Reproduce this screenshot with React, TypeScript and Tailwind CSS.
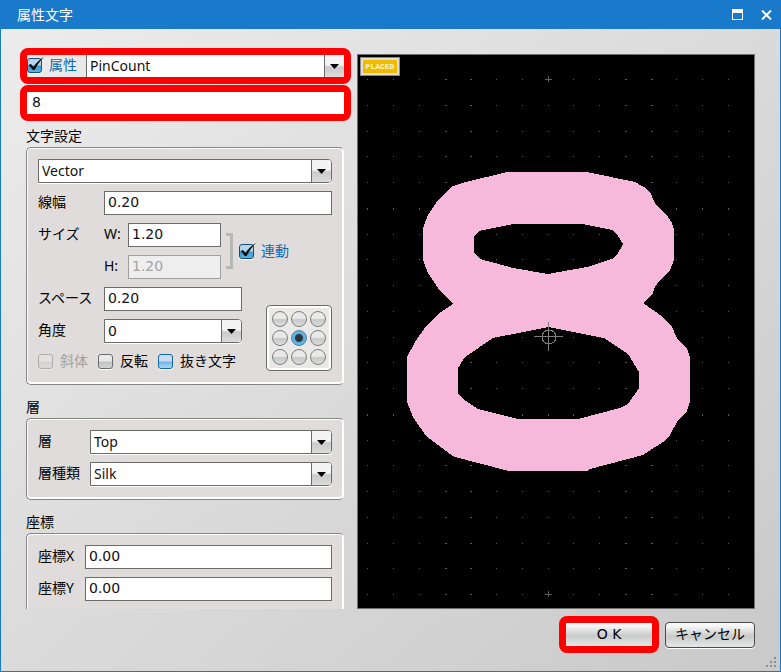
import { useState, type ReactNode } from "react";

const OUTER =
  "M507 172H587L635 182L644 187L650 192L655 203L668 217L672 223L674 229V260L670 270L660 280L655 287L652 295L643 303L663 317L672 327L677 338L687 349L690 357V402L687 411L677 422L670 435L666 440L643 455L590 469L587 471H509L455 457L450 454L426 436L413 417L407 402V357L415 342L426 326L438 314L453 304L440 291L428 273L423 260V228L428 215L438 200L451 187L462 183Z";
const UPPER_HOLE =
  "M513 224H583L612 230L618 236L623 244L617 255L612 259L587 267L548 274L513 268L480 259L474 253V237L479 231Z";
const LOWER_HOLE =
  "M548 327L604 338L628 354L639 372V388L628 404L620 408L578 419H518L478 409L463 399L458 393V368L465 357L493 338Z";

const GRID_STEP = 25.75;

type SelectBoxProps = {
  id: string;
  label?: string;
  options: string[];
  framed?: boolean;
  className?: string;
};

function SelectBox({ id, label, options, framed = true, className = "" }: SelectBoxProps) {
  return (
    <div
      className={`relative flex min-w-0 overflow-hidden bg-white ${
        framed
          ? "h-6 rounded-r border border-[#6b6b6b] shadow-[0_1px_0_#fff]"
          : "h-full border-l border-[#6b6b6b]"
      } ${className}`}
    >
      <select
        id={id}
        aria-label={label}
        className="w-full appearance-none bg-white pl-[3px] text-sm leading-[22px] text-[#111] outline-none"
      >
        {options.map((option) => (
          <option key={option}>{option}</option>
        ))}
      </select>
      <span className="pointer-events-none absolute inset-y-0 right-0 flex w-5 items-center justify-center border-l border-[#6b6b6b] bg-linear-to-b from-[#f4f4f4] from-45% via-[#c9cacb] via-55% to-[#dcdddd]">
        <svg width="9" height="5" viewBox="0 0 9 5">
          <path d="M0 0H9L4.500 5Z" fill="#000" />
        </svg>
      </span>
    </div>
  );
}

type TextBoxProps = {
  id: string;
  value: string;
  disabled?: boolean;
  className?: string;
};

function TextBox({ id, value, disabled = false, className = "" }: TextBoxProps) {
  const [text, setText] = useState(value);
  return (
    <input
      id={id}
      type="text"
      value={text}
      disabled={disabled}
      onChange={(e) => setText(e.target.value)}
      className={`h-6 min-w-0 border border-[#6b6b6b] bg-white pb-0.5 pl-[3px] font-['DejaVu_Sans',sans-serif] text-sm text-[#111] outline-none disabled:border-[#a0a0a0] disabled:bg-[#eeeeee] disabled:text-[#a3a3a3] ${className}`}
    />
  );
}

type CheckProps = {
  label: string;
  checked?: boolean;
  disabled?: boolean;
  tone?: "gray" | "blue";
  textClass?: string;
};

function Check({ label, checked = false, disabled = false, tone = "gray", textClass = "text-black" }: CheckProps) {
  const [on, setOn] = useState(checked);
  const box =
    tone === "blue"
      ? "border-[#10649f] bg-linear-to-b from-[#c5def3] from-45% via-[#79b4e3] via-55% to-[#a9d8f7]"
      : "border-[#6b6b6b] bg-linear-to-b from-[#e9e9e9] from-45% via-[#c3c4c4] via-55% to-[#d3d3d3]";
  const ticked = "checked:border-[#124f7c] checked:from-[#b5d5ec] checked:via-[#3d9bd3] checked:to-[#58b3e3]";
  return (
    <label className={`flex items-center gap-[7px] text-sm leading-5 ${textClass}`}>
      <span className="relative flex size-[15px]">
        <input
          type="checkbox"
          checked={on}
          disabled={disabled}
          onChange={() => setOn(!on)}
          className={`size-[15px] appearance-none rounded-[3px] border shadow-[0_1px_0_#fff] disabled:opacity-40 ${box} ${ticked}`}
        />
        {on && (
          <svg className="pointer-events-none absolute -top-px left-0" width="18" height="16" viewBox="0 0 18 16">
            <path d="M1.500 8L4 7L6.500 10C9 6 12.500 2.500 17 0C13 4 10 8.500 7.500 13H5.800C4.500 11 3 9.500 1.500 8Z" fill="#080c10" />
          </svg>
        )}
      </span>
      <span>{label}</span>
    </label>
  );
}

function Group({ title, children }: { title: string; children: ReactNode }) {
  return (
    <section className="mr-[7px] ml-1.5 shrink-0">
      <h2 className="pb-px text-sm leading-5 text-black">{title}</h2>
      <div className="flex flex-col gap-2 rounded-[5px] border border-[#858585] border-r-white bg-[#e0dcdb] p-[11px] pb-[13px] shadow-[inset_0_0_0_1px_#fff,inset_0_-1px_0_1px_#fff]">
        {children}
      </div>
    </section>
  );
}

type RowProps = {
  id: string;
  label: string;
  labelClass: string;
  children: ReactNode;
};

function Row({ id, label, labelClass, children }: RowProps) {
  return (
    <div className="flex">
      <label htmlFor={id} className={`shrink-0 text-sm leading-[22px] text-black ${labelClass}`}>
        {label}
      </label>
      {children}
    </div>
  );
}

function AnchorPicker() {
  const [anchor, setAnchor] = useState(4);
  return (
    <fieldset className="grid grid-cols-3 gap-[3px] rounded border border-[#6b6b6b] bg-[#ebe9e8] p-[5px] shadow-[inset_0_0_0_2px_#fff]">
      {Array.from({ length: 9 }, (_, i) => (
        <input
          key={i}
          type="radio"
          name="anchor"
          aria-label={`anchor ${i + 1}`}
          checked={anchor === i}
          onChange={() => setAnchor(i)}
          className="size-4 appearance-none rounded-full border border-[#7d7d7d] bg-linear-to-b from-[#e9e9e9] from-45% via-[#c6c8c9] via-55% to-[#dcdddd] checked:border-[#4e7fa5] checked:bg-radial checked:from-[#30353a] checked:from-35% checked:via-[#55aee0] checked:via-45% checked:to-[#86c1e8]"
        />
      ))}
    </fieldset>
  );
}

function Preview() {
  const dots = [];
  for (let row = -10; row <= 10; row++) {
    for (let col = -7; col <= 7; col++) {
      const wide = Math.abs(col) === 3 || Math.abs(col) === 4;
      const tall = row === -5 || row === 3;
      dots.push(
        <rect
          key={`${row}:${col}`}
          x={Math.floor(548 + col * GRID_STEP)}
          y={Math.round(336.5 + row * GRID_STEP)}
          width={wide ? 2 : 1}
          height={tall ? 2 : 1}
        />
      );
    }
  }

  return (
    <div className="relative mt-1.5 min-w-0 flex-1 border border-[#6f6f6f] bg-black">
      <svg
        className="absolute inset-0 size-full"
        viewBox="358 55 396 553"
        preserveAspectRatio="xMidYMid slice"
        shapeRendering="crispEdges"
      >
        <g fill="#585858">{dots}</g>
        <path d="M545 79.500H552M548.500 76V82M545 594.500H552M548.500 591V597" stroke="#5f5f5f" />
        <path d={OUTER + UPPER_HOLE + LOWER_HOLE} fill="#f6b8db" fillRule="evenodd" />
        <g stroke="#7d7d7d" fill="none">
          <path d="M534 336.500H563M548.500 322V351" />
          <circle cx="549" cy="337" r="7" />
        </g>
      </svg>
      <span className="absolute top-0.5 left-0.5 flex h-[19px] w-10 items-center justify-center border border-[#8a8a8a] bg-[#efbb00] font-['Liberation_Mono',monospace] text-[8px] leading-none font-bold text-[#fff6c4] shadow-[inset_0_0_0_2px_#e2ddd0]">
        PLACED
      </span>
    </div>
  );
}

const buttonClass =
  "h-[26px] bg-linear-to-b from-[#f8f8f8] from-10% via-[#c9cbcb] via-55% to-[#e6e7e7] pb-0.5 text-sm leading-5 text-black";

function App() {
  return (
    <div className="flex h-screen flex-col border border-t-0 border-[#1979ca] bg-linear-to-br from-[#ededed] to-[#c9c9c9] font-['Noto_Sans','Noto_Sans_CJK_JP',sans-serif]">
      <header className="flex h-[29px] shrink-0 items-center bg-[#1979ca] pr-2 pl-4 text-white">
        <h1 className="flex-1 text-sm leading-5">属性文字</h1>
        <button type="button" aria-label="最大化" className="mr-[18px]">
          <svg width="11" height="11" viewBox="0 0 11 11" shapeRendering="crispEdges">
            <path d="M0 0H11V11H0ZM1 4V10H10V4Z" fill="#fff" fillRule="evenodd" />
          </svg>
        </button>
        <button type="button" aria-label="閉じる">
          <svg width="11" height="10" viewBox="0 0 11 10">
            <path d="M1 0.500L10 9.500M10 0.500L1 9.500" stroke="#fff" strokeWidth="2" />
          </svg>
        </button>
      </header>

      <main className="flex min-h-0 flex-1 gap-1.5 pt-[19px] pr-[25px] pl-[19px]">
        <div className="flex w-[331px] shrink-0 flex-col overflow-hidden">
          <div className="flex h-9 shrink-0 overflow-hidden rounded-lg border-[7px] border-[#ff0000]">
            <div className="w-[59px]">
              <Check label="属性" checked tone="blue" textClass="text-[#0f6ab4]" />
            </div>
            <SelectBox id="attribute" label="属性" options={["PinCount"]} framed={false} className="flex-1" />
          </div>
          <div className="mt-px mb-[5px] flex h-9 shrink-0 overflow-hidden rounded-lg border-[7px] border-[#ff0000]">
            <input
              type="text"
              aria-label="値"
              defaultValue="8"
              className="w-full bg-white pb-0.5 pl-[5px] font-['DejaVu_Sans',sans-serif] text-sm text-[#111] outline-none"
            />
          </div>

          <div className="flex min-h-0 flex-col gap-3 overflow-hidden">
            <Group title="文字設定">
              <SelectBox id="font" label="フォント" options={["Vector", "TrueType"]} />
              <Row id="lineWidth" label="線幅" labelClass="w-[66px]">
                <TextBox id="lineWidth" value="0.20" className="flex-1" />
              </Row>
              <div className="flex">
                <span className="w-[66px] text-sm leading-[22px] text-black">サイズ</span>
                <div className="flex flex-col gap-2">
                  <Row id="sizeW" label="W:" labelClass="w-6">
                    <TextBox id="sizeW" value="1.20" className="w-[93px]" />
                  </Row>
                  <Row id="sizeH" label="H:" labelClass="w-6">
                    <TextBox id="sizeH" value="1.20" disabled className="w-[93px]" />
                  </Row>
                </div>
                <div className="mr-1.5 ml-[5px] h-9 w-[7px] self-center border-3 border-l-0 border-[#b9b8b8]" />
                <Check label="連動" checked tone="blue" textClass="text-[#0f6ab4]" />
              </div>
              <div className="flex items-end justify-between">
                <div className="flex flex-col gap-2">
                  <Row id="spacing" label="スペース" labelClass="w-[66px]">
                    <TextBox id="spacing" value="0.20" className="w-[138px]" />
                  </Row>
                  <Row id="angle" label="角度" labelClass="w-[66px]">
                    <SelectBox
                      id="angle"
                      options={["0", "90", "180", "270"]}
                      className="w-[138px] font-['DejaVu_Sans',sans-serif]"
                    />
                  </Row>
                  <div className="flex gap-2.5">
                    <Check label="斜体" disabled textClass="text-[#a3a1a1]" />
                    <Check label="反転" />
                    <Check label="抜き文字" tone="blue" />
                  </div>
                </div>
                <AnchorPicker />
              </div>
            </Group>

            <Group title="層">
              <Row id="layer" label="層" labelClass="w-[52px]">
                <SelectBox id="layer" options={["Top", "Bottom"]} className="flex-1" />
              </Row>
              <Row id="layerType" label="層種類" labelClass="w-[52px]">
                <SelectBox id="layerType" options={["Silk", "Metal"]} className="flex-1" />
              </Row>
            </Group>

            <Group title="座標">
              <Row id="posX" label="座標X" labelClass="w-[47px]">
                <TextBox id="posX" value="0.00" className="flex-1" />
              </Row>
              <Row id="posY" label="座標Y" labelClass="w-[47px]">
                <TextBox id="posY" value="0.00" className="flex-1" />
              </Row>
            </Group>
          </div>
        </div>

        <Preview />
      </main>

      <footer className="relative flex h-[62px] shrink-0 items-start justify-end gap-1.5 pt-[7px] pr-[25px]">
        <div className="flex h-[37px] w-[100px] flex-col overflow-hidden rounded-lg border-[7px] border-[#ff0000]">
          <button type="button" className={`${buttonClass} flex-1 font-['DejaVu_Sans',sans-serif]`}>
            O K
          </button>
        </div>
        <button
          type="button"
          className={`${buttonClass} mt-1.5 w-[90px] rounded border border-[#4a4a4a] shadow-[0_1px_0_#fff]`}
        >
          キャンセル
        </button>
        <svg className="absolute right-[3px] bottom-[3px]" width="11" height="11" viewBox="0 0 11 11" fill="#8f8f8f">
          <path d="M8 0h2v2h-2zM4 4h2v2h-2zM8 4h2v2h-2zM0 8h2v2h-2zM4 8h2v2h-2zM8 8h2v2h-2z" />
        </svg>
      </footer>
    </div>
  );
}

export default App;
